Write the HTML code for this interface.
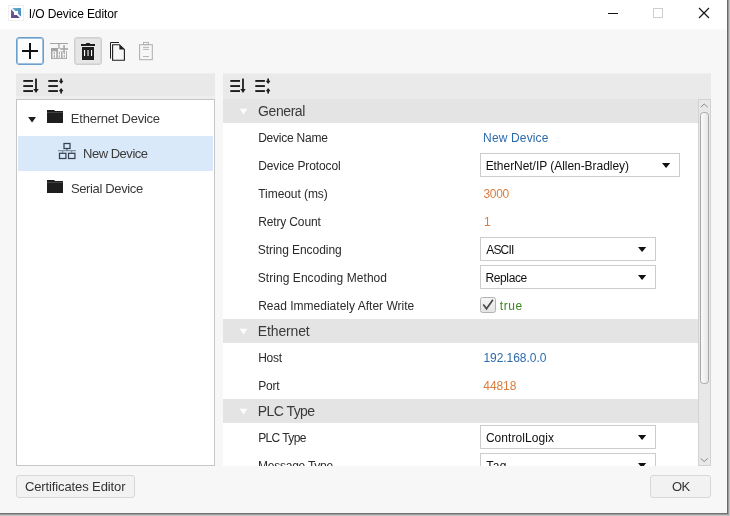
<!DOCTYPE html>
<html><head><meta charset="utf-8"><title>I/O Device Editor</title>
<style>
html,body{margin:0;padding:0;}
body{width:730px;height:516px;overflow:hidden;background:#c6c6c6;font-family:"Liberation Sans",sans-serif;position:relative;}
#win{position:absolute;left:0;top:0;width:727px;height:513px;background:#f7f7f7;border-right:1px solid #6a6a6a;border-bottom:1px solid #727272;overflow:hidden;}
#sh1{position:absolute;left:0;top:0;width:729px;height:515px;background:#9c9c9c;}
#title{position:absolute;left:0;top:0;width:727px;height:29px;background:#fff;}
.t{position:absolute;white-space:nowrap;line-height:1;}
.tl{position:absolute;left:0;top:0;width:727px;height:513px;will-change:transform;}
.a{position:absolute;}
.band{position:absolute;left:223px;width:476px;height:24px;background:#e4e4e4;}
.combo{position:absolute;height:22px;border:1px solid #cacccd;background:#fff;}

svg{position:absolute;overflow:visible;}
</style></head><body>
<div id="sh1"></div>
<div id="win">
<div id="title"></div><div class="a" style="left:0;top:29px;width:727px;height:1px;background:#fbfbfb;"></div>
<svg style="left:0;top:0" width="30" height="30" viewBox="0 0 30 30">
<defs><linearGradient id="gb" x1="0" y1="0" x2="1" y2="1"><stop offset="0" stop-color="#6ab4d8"/><stop offset="1" stop-color="#3d7eae"/></linearGradient>
<linearGradient id="gp" x1="0" y1="0" x2="1" y2="1"><stop offset="0" stop-color="#8062aa"/><stop offset="1" stop-color="#523d80"/></linearGradient>
<clipPath id="cb"><path d="M11.2 7 H22 V17.8 Z"/></clipPath>
<clipPath id="cp"><path d="M10 8.2 V19 H20.8 Z"/></clipPath></defs>
<rect x="8.5" y="5.5" width="15" height="15" fill="#fff" stroke="#efefef" stroke-width="1"/>
<path clip-path="url(#cb)" fill-rule="evenodd" d="M11 8 H21 V18 H11 Z M14 11 V15 H18 V11 Z" fill="url(#gb)"/>
<path clip-path="url(#cp)" fill-rule="evenodd" d="M11 8 H21 V18 H11 Z M14 11 V15 H18 V11 Z" fill="url(#gp)"/>
</svg>

<svg style="left:590px;top:0" width="137" height="30" viewBox="590 0 137 30">
<path d="M608 13.5 H618" stroke="#111" stroke-width="1"/>
<rect x="653.5" y="8.5" width="9" height="9" fill="none" stroke="#cfcfcf" stroke-width="1"/>
<path d="M699 8 L709 18 M709 8 L699 18" stroke="#111" stroke-width="1.1"/>
</svg>
<div class="a" style="left:16px;top:37px;width:26px;height:26px;border:1px solid #6a9fcc;border-radius:3px;background:#fbfdff;box-shadow:inset 0 0 0 1px rgba(110,163,208,0.65);"></div>
<div class="a" style="left:22px;top:50px;width:16px;height:2px;background:#111;"></div>
<div class="a" style="left:29px;top:43px;width:2px;height:16px;background:#111;"></div>
<svg style="left:48px;top:40px" width="24" height="22" viewBox="48 40 24 22">
<g fill="#a3a3a3">
<rect x="50" y="43" width="18" height="1"/>
<rect x="51" y="48" width="16" height="10.9"/>
</g>
<rect x="52.5" y="51.3" width="3.8" height="6.5" fill="#f9f9f9"/>
<rect x="57.8" y="51.3" width="3.3" height="6.5" fill="#f9f9f9"/>
<rect x="62.5" y="51.3" width="3.6" height="6.5" fill="#f9f9f9"/>
<rect x="57.3" y="44.6" width="11" height="6.7" fill="#f6f6f6"/>
<g fill="#a3a3a3">
<rect x="53.8" y="52.2" width="1.2" height="2"/><rect x="53.8" y="55.2" width="1.2" height="2"/>
<rect x="58.8" y="52.2" width="1.2" height="2"/><rect x="58.8" y="55.2" width="1.2" height="2"/>
<rect x="63.7" y="52.2" width="1.2" height="2"/><rect x="63.7" y="55.2" width="1.2" height="2"/>
<rect x="60.1" y="48.2" width="7.9" height="1.5"/>
<rect x="63.3" y="45.1" width="1.5" height="7.3"/>
<rect x="58.3" y="44" width="1.3" height="4.8"/>
<rect x="56.8" y="48" width="1.2" height="3.4"/>
</g>
</svg>
<div class="a" style="left:74px;top:37px;width:26px;height:26px;border:1px solid #d0d0d0;border-radius:3px;background:#e6e6e6;box-shadow:inset 0 0 0 1px rgba(208,208,208,0.6);"></div>
<svg style="left:74px;top:37px" width="28" height="28" viewBox="74 37 28 28">
<rect x="86" y="43" width="4" height="1.2" rx="0.5" fill="#1e1e1e"/>
<rect x="81" y="44" width="14" height="2" fill="#1e1e1e"/>
<rect x="82" y="47" width="12" height="13" fill="#1e1e1e"/>
<rect x="84" y="50" width="1.1" height="6" fill="#fff"/>
<rect x="87.3" y="50" width="1.5" height="6" fill="#bdbdbd"/>
<rect x="91" y="50" width="1.1" height="6" fill="#fff"/>
</svg>
<svg style="left:104px;top:37px" width="28" height="28" viewBox="104 37 28 28">
<path d="M119 42.5 H110.5 V58.6" fill="none" stroke="#1e1e1e" stroke-width="1"/>
<path d="M112.6 44.7 H119.4 L124.4 49.4 V60.2 H112.6 Z" fill="none" stroke="#1e1e1e" stroke-width="1.1"/>
<path d="M119.4 44.8 V49.4 H124.3 Z" fill="#1e1e1e"/>
</svg>
<svg style="left:134px;top:37px" width="28" height="28" viewBox="134 37 28 28">
<rect x="139.6" y="44.7" width="12.7" height="15" fill="none" stroke="#adadad" stroke-width="1"/>
<rect x="143.5" y="42.4" width="5" height="2.3" fill="none" stroke="#adadad" stroke-width="0.9"/>
<rect x="143" y="46.9" width="6" height="0.9" fill="#adadad"/>
<rect x="143" y="48.9" width="6" height="0.9" fill="#adadad"/>
<rect x="143" y="56" width="6" height="0.9" fill="#adadad"/>
</svg>
<div class="a" style="left:16px;top:73px;width:199px;height:26px;background:#eeeeee;"></div>
<div class="a" style="left:16px;top:74px;width:199px;height:22px;background:#e9e9e9;"></div>
<svg style="left:20px;top:75px" width="50" height="22" viewBox="20 75 50 22">
<g transform="translate(0,0)" fill="#1e1e1e">
<rect x="23.3" y="80" width="9.7" height="1.9"/><rect x="23.3" y="85.1" width="9.7" height="1.9"/><rect x="23.3" y="90.1" width="9.7" height="1.9"/>
<rect x="35.1" y="78.6" width="1.8" height="12"/><path d="M33.3 88.9 H38.7 L36 93.1 Z"/>
<rect x="48.3" y="80" width="9.6" height="1.9"/><rect x="48.3" y="85.1" width="9.6" height="1.9"/><rect x="48.3" y="90.1" width="9.6" height="1.9"/>
<path d="M60.3 78.6 H62 V80.5 L63.4 80.9 L61.15 84.1 L58.9 80.9 L60.3 80.5 Z"/>
<path d="M60.3 93.4 H62 V91.5 L63.4 91.1 L61.15 87.9 L58.9 91.1 L60.3 91.5 Z"/>
</g></svg>
<div class="a" style="left:16px;top:99px;width:197px;height:365px;background:#fff;border:1px solid #c6c6c6;"></div>
<div class="a" style="left:18px;top:136px;width:195px;height:35px;background:#dae9f9;"></div>
<svg style="left:28px;top:116px" width="9" height="8" viewBox="0 0 9 8"><path d="M0.1 1 H8 L4.05 6.5 Z" fill="#1e1e1e"/></svg>
<svg style="left:46px;top:110px" width="18" height="14" viewBox="46 110 18 14">
<rect x="47" y="112" width="16" height="1.5" fill="#6a6a6a"/><path d="M47 110 H54.2 L55 111 H63 V112.5 H47 Z" fill="#1e1e1e"/><rect x="47" y="113" width="16" height="10" fill="#1e1e1e"/></svg>
<svg style="left:46px;top:180px" width="18" height="14" viewBox="46 110 18 14">
<rect x="47" y="112" width="16" height="1.5" fill="#6a6a6a"/><path d="M47 110 H54.2 L55 111 H63 V112.5 H47 Z" fill="#1e1e1e"/><rect x="47" y="113" width="16" height="10" fill="#1e1e1e"/></svg>
<svg style="left:57px;top:142px" width="20" height="18" viewBox="57 142 20 18">
<g fill="none" stroke="#364150" stroke-width="1.25">
<rect x="64" y="143.5" width="6" height="5"/>
<rect x="59.5" y="153.3" width="6.4" height="5.2"/>
<rect x="68.5" y="153.3" width="6.4" height="5.2"/>
</g>
<rect x="58" y="150.2" width="18" height="1" fill="#76808e"/>
<rect x="66.5" y="149" width="1" height="1.5" fill="#3f4854"/>
<rect x="62.2" y="151" width="1" height="2" fill="#76808e"/><rect x="71.2" y="151" width="1" height="2" fill="#76808e"/>
</svg>



<div class="a" style="left:223px;top:73px;width:488px;height:26px;background:#efefef;"></div>
<div class="a" style="left:223px;top:74px;width:488px;height:25px;background:#eaeaea;"></div>
<svg style="left:227px;top:75px" width="50" height="22" viewBox="20 75 50 22">
<g transform="translate(0,0)" fill="#1e1e1e">
<rect x="23.3" y="80" width="9.7" height="1.9"/><rect x="23.3" y="85.1" width="9.7" height="1.9"/><rect x="23.3" y="90.1" width="9.7" height="1.9"/>
<rect x="35.1" y="78.6" width="1.8" height="12"/><path d="M33.3 88.9 H38.7 L36 93.1 Z"/>
<rect x="48.3" y="80" width="9.6" height="1.9"/><rect x="48.3" y="85.1" width="9.6" height="1.9"/><rect x="48.3" y="90.1" width="9.6" height="1.9"/>
<path d="M60.3 78.6 H62 V80.5 L63.4 80.9 L61.15 84.1 L58.9 80.9 L60.3 80.5 Z"/>
<path d="M60.3 93.4 H62 V91.5 L63.4 91.1 L61.15 87.9 L58.9 91.1 L60.3 91.5 Z"/>
</g></svg>
<div class="a" style="left:223px;top:99px;width:476px;height:367px;background:#fff;"></div>
<div class="band" style="top:99px;"></div>
<svg style="left:239px;top:108px" width="9" height="7" viewBox="0 0 9 7"><path d="M0.6 0.8 H8.4 L4.5 6.6 Z" fill="#fdfdfd"/></svg>
<div class="band" style="top:319px;"></div>
<svg style="left:239px;top:328px" width="9" height="7" viewBox="0 0 9 7"><path d="M0.6 0.8 H8.4 L4.5 6.6 Z" fill="#fdfdfd"/></svg>
<div class="band" style="top:399px;"></div>
<svg style="left:239px;top:408px" width="9" height="7" viewBox="0 0 9 7"><path d="M0.6 0.8 H8.4 L4.5 6.6 Z" fill="#fdfdfd"/></svg>


















<div class="combo" style="left:480px;top:153px;width:198px;"></div>

<svg style="left:662px;top:162px" width="9" height="7" viewBox="0 0 9 7"><path d="M0 0.9 H8.2 L4.1 6.1 Z" fill="#111"/></svg>
<div class="combo" style="left:480px;top:237px;width:174px;"></div>

<svg style="left:638px;top:246px" width="9" height="7" viewBox="0 0 9 7"><path d="M0 0.9 H8.2 L4.1 6.1 Z" fill="#111"/></svg>
<div class="combo" style="left:480px;top:265px;width:174px;"></div>

<svg style="left:638px;top:274px" width="9" height="7" viewBox="0 0 9 7"><path d="M0 0.9 H8.2 L4.1 6.1 Z" fill="#111"/></svg>
<div class="combo" style="left:480px;top:425px;width:174px;"></div>

<svg style="left:638px;top:434px" width="9" height="7" viewBox="0 0 9 7"><path d="M0 0.9 H8.2 L4.1 6.1 Z" fill="#111"/></svg>
<div class="a" style="left:480px;top:297px;width:14px;height:14px;border:1px solid #b2b2b2;border-radius:2.5px;background:linear-gradient(#f6f6f6,#e4e4e4);"></div>
<svg style="left:480px;top:297px" width="16" height="16" viewBox="0 0 16 16"><path d="M3.3 7.5 L6.5 11.8 L12.9 2.8" fill="none" stroke="#484848" stroke-width="1.7"/></svg>

<div class="a" style="left:0;top:451px;width:699px;height:14.8px;overflow:hidden;"><div class="a" style="left:0;top:-451px;">

<div class="combo" style="left:480px;top:453px;width:174px;"></div>

<svg style="left:638px;top:462px" width="9" height="7" viewBox="0 0 9 7"><path d="M0 0.9 H8.2 L4.1 6.1 Z" fill="#111"/></svg>
</div></div>
<div class="a" style="left:698px;top:99px;width:11px;height:365px;background:#e8e8e8;border:1px solid #d2d2d2;"></div>
<div class="a" style="left:700px;top:112px;width:7px;height:270px;border:1px solid #a8a8a8;border-radius:3.5px;background:linear-gradient(90deg,#fbfbfb,#e6e6e6);"></div>
<svg style="left:698px;top:99px" width="13" height="366" viewBox="698 99 13 366">
<path d="M700.7 107.2 L704.2 104 L707.7 107.2" fill="none" stroke="#858585" stroke-width="0.95"/>
<path d="M700.7 458.4 L704.2 461.6 L707.7 458.4" fill="none" stroke="#858585" stroke-width="0.95"/>
</svg>
<div class="a" style="left:16px;top:475px;width:117px;height:21px;border:1px solid #d8d8d8;border-radius:3px;background:#f2f2f2;"></div>

<div class="a" style="left:650px;top:475px;width:59px;height:21px;border:1px solid #d8d8d8;border-radius:3px;background:#f2f2f2;"></div>

<div class="tl"><span class="t" style="left:28.87px;top:8px;font-size:12px;letter-spacing:-0.115px;color:#000;">I/O Device Editor</span><span class="t" style="left:70.82px;top:112px;font-size:13px;letter-spacing:-0.230px;color:#3a3a3a;">Ethernet Device</span><span class="t" style="left:83.00px;top:147px;font-size:13px;letter-spacing:-0.477px;color:#3a3a3a;">New Device</span><span class="t" style="left:70.96px;top:182px;font-size:13px;letter-spacing:-0.365px;color:#3a3a3a;">Serial Device</span><span class="t" style="left:258.10px;top:104px;font-size:14px;letter-spacing:-0.427px;color:#3a3a3a;">General</span><span class="t" style="left:257.81px;top:324px;font-size:14px;letter-spacing:-0.144px;color:#3a3a3a;">Ethernet</span><span class="t" style="left:257.81px;top:404px;font-size:14px;letter-spacing:-0.564px;color:#3a3a3a;">PLC Type</span><span class="t" style="left:258.13px;top:132px;font-size:12px;letter-spacing:-0.230px;color:#2b2b2b;">Device Name</span><span class="t" style="left:258.13px;top:160px;font-size:12px;letter-spacing:-0.109px;color:#2b2b2b;">Device Protocol</span><span class="t" style="left:258.31px;top:188px;font-size:12px;letter-spacing:-0.066px;color:#2b2b2b;">Timeout (ms)</span><span class="t" style="left:258.13px;top:216px;font-size:12px;letter-spacing:-0.132px;color:#2b2b2b;">Retry Count</span><span class="t" style="left:257.76px;top:244px;font-size:12px;letter-spacing:-0.054px;color:#2b2b2b;">String Encoding</span><span class="t" style="left:257.76px;top:272px;font-size:12px;letter-spacing:0.057px;color:#2b2b2b;">String Encoding Method</span><span class="t" style="left:258.13px;top:300px;font-size:12px;letter-spacing:0.012px;color:#2b2b2b;">Read Immediately After Write</span><span class="t" style="left:258.13px;top:352px;font-size:12px;letter-spacing:-0.259px;color:#2b2b2b;">Host</span><span class="t" style="left:258.13px;top:380px;font-size:12px;letter-spacing:-0.182px;color:#2b2b2b;">Port</span><span class="t" style="left:258.13px;top:432px;font-size:12px;letter-spacing:-0.600px;color:#2b2b2b;">PLC Type</span><span class="t" style="left:483.08px;top:132px;font-size:12px;letter-spacing:0.149px;color:#2e6bab;">New Device</span><span class="t" style="left:483.39px;top:188px;font-size:12px;letter-spacing:-0.259px;color:#d97b3d;">3000</span><span class="t" style="left:483.90px;top:216px;font-size:12px;letter-spacing:0.000px;color:#d97b3d;">1</span><span class="t" style="left:483.40px;top:352px;font-size:12px;letter-spacing:-0.042px;color:#2e6bab;">192.168.0.0</span><span class="t" style="left:483.32px;top:380px;font-size:12px;letter-spacing:-0.091px;color:#d97b3d;">44818</span><span class="t" style="left:485.64px;top:160px;font-size:12px;letter-spacing:-0.045px;color:#111;">EtherNet/IP (Allen-Bradley)</span><span class="t" style="left:486.25px;top:244px;font-size:12px;letter-spacing:-0.824px;color:#111;">ASCII</span><span class="t" style="left:485.48px;top:272px;font-size:12px;letter-spacing:-0.370px;color:#111;">Replace</span><span class="t" style="left:485.89px;top:432px;font-size:12px;letter-spacing:0.064px;color:#111;">ControlLogix</span><span class="t" style="left:499.87px;top:300px;font-size:12px;letter-spacing:0.572px;color:#3c8420;">true</span><span class="t" style="left:24.88px;top:480px;font-size:13px;letter-spacing:-0.108px;color:#333;">Certificates Editor</span><span class="t" style="left:672.00px;top:480px;font-size:13px;letter-spacing:-0.600px;color:#333;">OK</span></div>
<div class="a" style="left:0;top:451px;width:699px;height:14.8px;overflow:hidden;will-change:transform;"><div class="a" style="left:0;top:-451px;"><span class="t" style="left:258.10px;top:460px;font-size:12px;letter-spacing:-0.250px;color:#2b2b2b;">Message Type</span><span class="t" style="left:486.30px;top:460px;font-size:12px;letter-spacing:0.350px;color:#111;">Tag</span></div></div>
</div>
</body></html>
